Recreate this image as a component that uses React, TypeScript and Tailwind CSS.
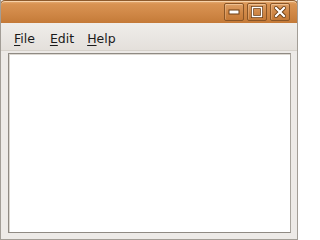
import React from "react";

function Btn({ children }: { children: React.ReactNode }) {
  return (
    <div className="w-[20px] h-[18px] rounded-[2px] border border-[#8a5526] bg-[linear-gradient(#dea066,#cf8645_55%,#c47936)] shadow-[inset_0_1px_0_rgba(255,225,190,0.5),inset_1px_0_0_rgba(255,220,180,0.3)] flex items-center justify-center">
      {children}
    </div>
  );
}

function U({ c, rest, className }: { c: string; rest: string; className: string }) {
  return (
    <span className={className}>
      <span className="underline underline-offset-[2px] decoration-1">{c}</span>
      {rest}
    </span>
  );
}

export default function App() {
  return (
    <div className="w-[298px] h-[240px] flex flex-col bg-[#edeae7] border-x border-b border-[#a29d96] overflow-hidden" style={{ fontFamily: '"DejaVu Sans", sans-serif' }}>
      <div className="h-[23px] -mx-px shrink-0 rounded-t-[5px] border border-b-0 border-[#8d5a2c] bg-[linear-gradient(#e8b27c_0px,#d99352_3px,#d08847_55%,#c47a38)] shadow-[inset_0_1px_0_rgba(255,225,190,0.7)] flex items-start justify-end pr-[7px] pt-[2px] gap-[3px]">
        <Btn>
          <svg width="12" height="6" viewBox="0 0 12 6">
            <rect x="1" y="1" width="10" height="4" fill="#fff" stroke="#6e3f15" strokeWidth="1" />
          </svg>
        </Btn>
        <Btn>
          <svg width="12" height="12" viewBox="0 0 12 12">
            <rect x="1.5" y="1.5" width="9" height="9" fill="none" stroke="#6e3f15" strokeWidth="3" />
            <rect x="1.5" y="1.5" width="9" height="9" fill="none" stroke="#fff" strokeWidth="1.4" />
          </svg>
        </Btn>
        <Btn>
          <svg width="12" height="12" viewBox="0 0 12 12">
            <path d="M2 2L10 10M10 2L2 10" stroke="#6e3f15" strokeWidth="4" strokeLinecap="square" />
            <path d="M2 2L10 10M10 2L2 10" stroke="#fff" strokeWidth="2.2" strokeLinecap="square" />
          </svg>
        </Btn>
      </div>
      <div className="h-[28px] shrink-0 bg-[linear-gradient(#efedea,#e4e0db)] border-b border-[#d6d1ca] flex items-start pt-[9px] text-[12.5px] leading-[14px] text-[#1a1a1a]">
        <U c="F" rest="ile" className="ml-[13px]" />
        <U c="E" rest="dit" className="ml-[15px]" />
        <U c="H" rest="elp" className="ml-[13px]" />
      </div>
      <div className="flex-1 pl-[7px] pr-[6px] pt-[2px] pb-[6px] flex">
        <div className="flex-1 bg-white border border-[#8f8a83] border-r-[#a9a49d] shadow-[inset_1px_1px_0_#dcd8d2]" />
      </div>
    </div>
  );
}
